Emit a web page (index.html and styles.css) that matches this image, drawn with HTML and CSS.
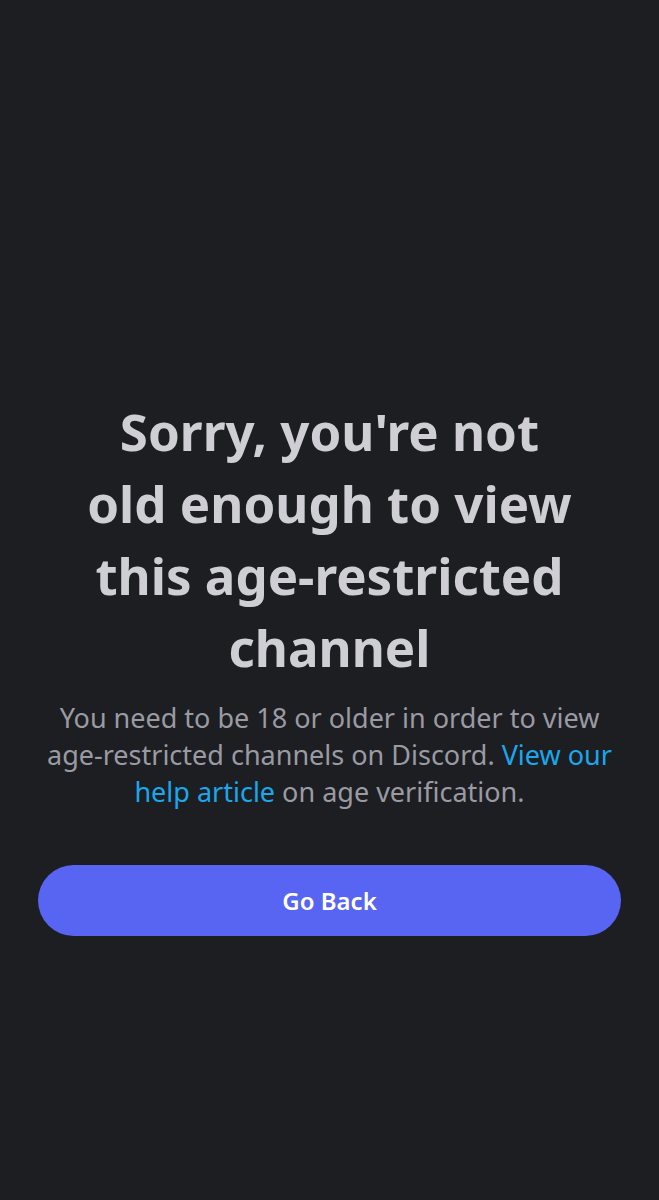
FILE: index.html
```html
<!DOCTYPE html>
<html>
<head>
  <title>Age-Restricted Channel</title>
  <link rel="stylesheet" href="styles.css">
</head>
<body>

<div class="gate">
  <h1 class="gate_title">Sorry, you're not<br>old enough to view<br>this age-restricted<br>channel</h1>
  <p class="gate_text">You need to be 18 or older in order to view<br>age-restricted channels on Discord. <a href="#" class="gate_link">View our<br>help article</a> on age verification.</p>
  <button class="gate_button">Go Back</button>
</div>

</body>
</html>
```
FILE: styles.css
```css
body{
  margin: 0;
  background-color: #1d1e22;
  font-family: "Noto Sans", sans-serif;
}
.gate {
  display: flex;
  flex-direction: column;
  align-items: center;
  padding: 395px 38px 0;
}
.gate_title {
  margin: 0;
  color: #ceced4;
  font-size: 51px;
  line-height: 72px;
  font-weight: 700;
  text-align: center;
  white-space: nowrap;
}
.gate_text {
  margin: 16px 0 0;
  color: #9a9ba2;
  font-size: 27px;
  line-height: 37px;
  text-align: center;
  white-space: nowrap;
}
.gate_link {
  color: #1aa7ec;
  text-decoration: none;
}
.gate_button {
  margin-top: 55px;
  width: 100%;
  height: 71px;
  border: none;
  border-radius: 36px;
  background-color: #5865f2;
  color: #ffffff;
  font-family: "Noto Sans", sans-serif;
  font-size: 24px;
  font-weight: 600;
}
```
